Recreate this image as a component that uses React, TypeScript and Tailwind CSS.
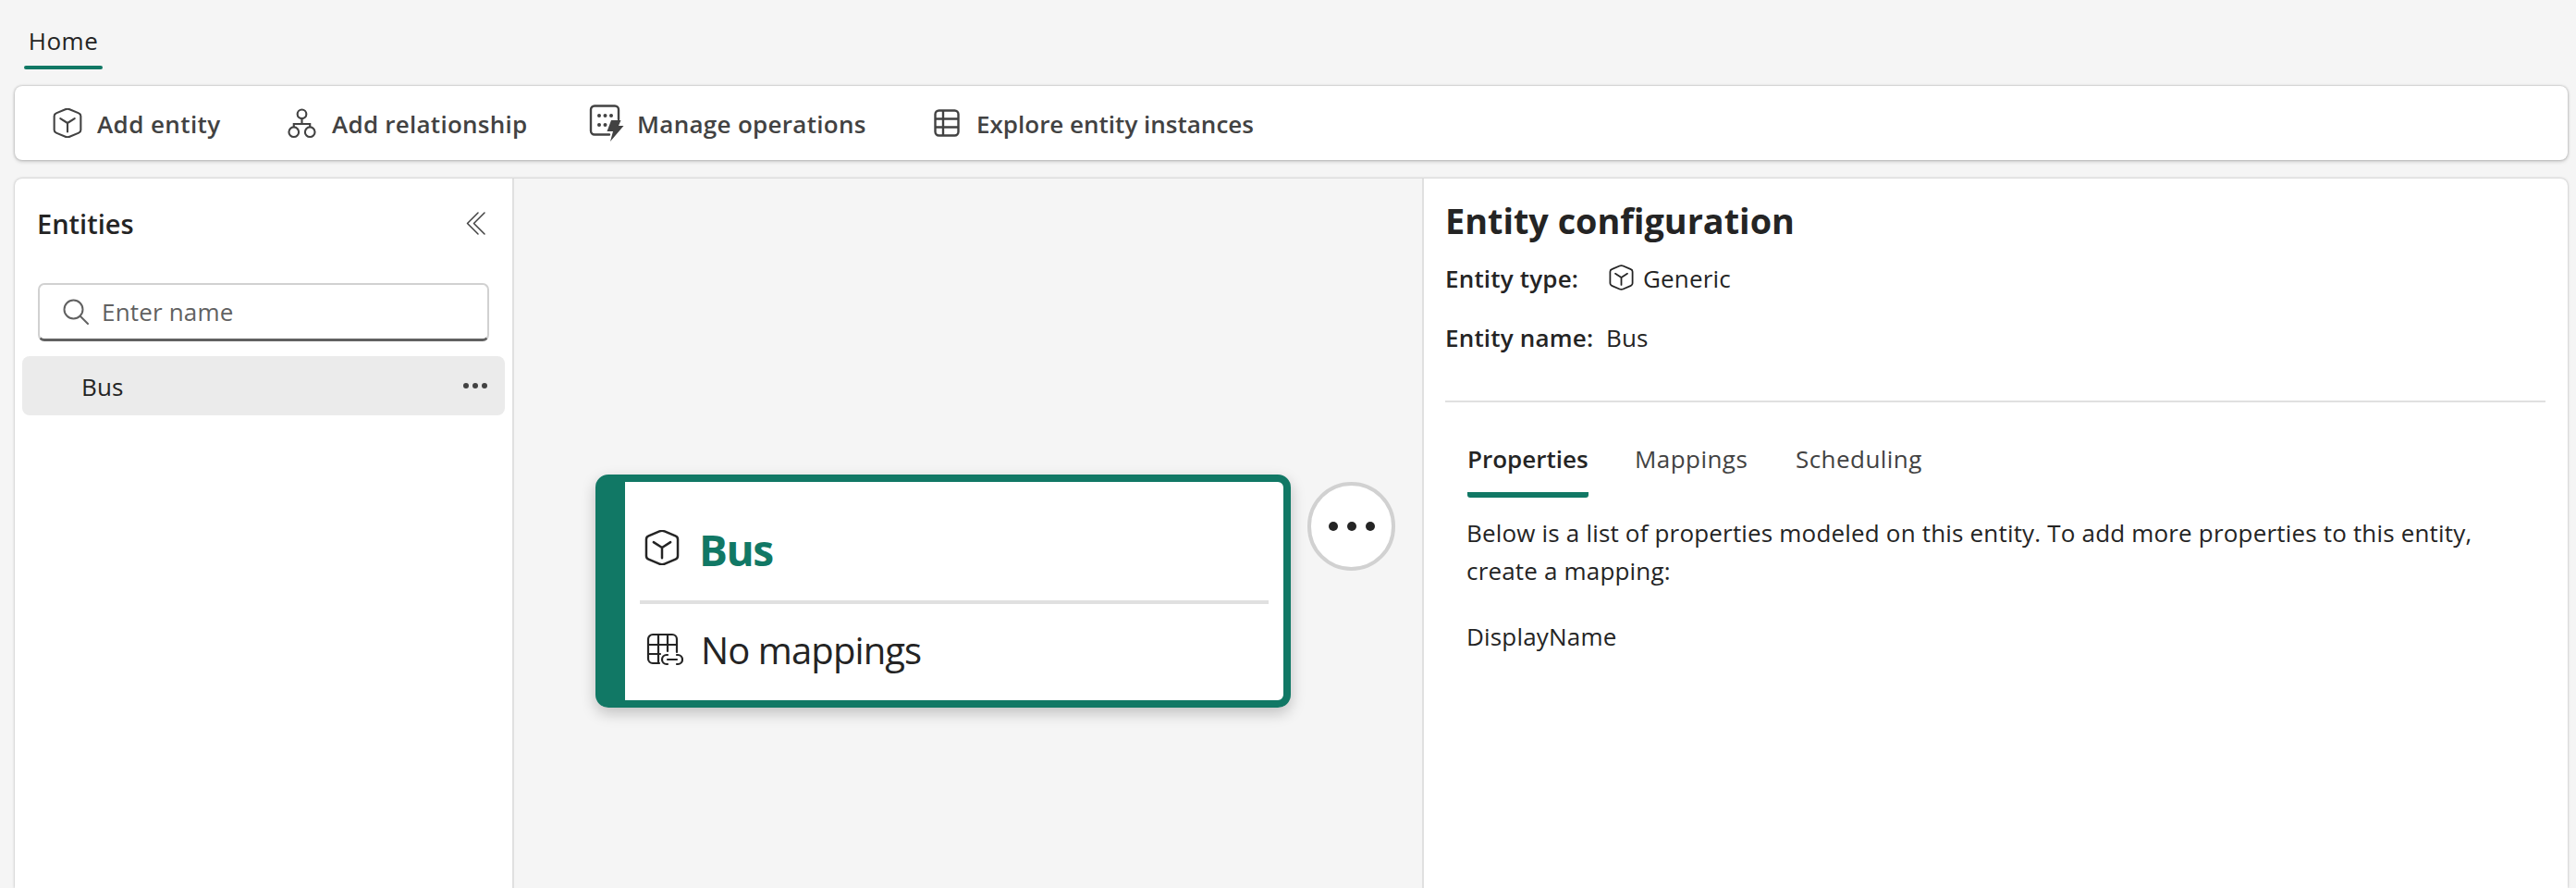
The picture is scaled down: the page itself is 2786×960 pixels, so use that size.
import React from 'react';

function CubeIcon({ className }: { className?: string }) {
  return (
    <svg viewBox="1.5 1.5 29 29" fill="none" stroke="currentColor" strokeWidth="1.9" strokeLinejoin="round" strokeLinecap="round" className={className}>
      <path d="M13.9 2.6 4.9 6.4A3 3 0 0 0 3 9.2v13.6a3 3 0 0 0 1.9 2.8l9 3.8a5.4 5.4 0 0 0 4.2 0l9-3.8a3 3 0 0 0 1.9-2.8V9.2a3 3 0 0 0-1.9-2.8l-9-3.8a5.4 5.4 0 0 0-4.2 0Z" />
      <path d="M9 11.5 16 16l7-4.5M16 16v8.500" />
    </svg>
  );
}

function RelationshipIcon({ className }: { className?: string }) {
  return (
    <svg viewBox="0 0 32 34" fill="none" stroke="currentColor" strokeWidth="2.2" className={className}>
      <circle cx="16" cy="7" r="5" />
      <circle cx="7" cy="27" r="5.500" />
      <circle cx="25" cy="27" r="5.500" />
      <path d="M16 12v6M7 21.500V18h18v3.500" />
    </svg>
  );
}

function OperationsIcon({ className }: { className?: string }) {
  return (
    <svg viewBox="0 0 38 40" fill="none" className={className}>
      <path d="M22 32.500H6a4 4 0 0 1-4-4V5.500a4 4 0 0 1 4-4h22a4 4 0 0 1 4 4V16" stroke="currentColor" strokeWidth="2.4" strokeLinecap="round" />
      <g fill="currentColor">
        <circle cx="11" cy="12" r="2" />
        <circle cx="17.500" cy="12" r="2" />
        <circle cx="24" cy="12" r="2" />
        <circle cx="11" cy="22" r="2" />
        <circle cx="17.500" cy="22" r="2" />
        <path d="M24 17h10.500l-2.500 6h5.500L23 40l3-11h-6.500L24 17Z" />
      </g>
    </svg>
  );
}

function TableIcon({ className }: { className?: string }) {
  return (
    <svg viewBox="0 0 28 30" fill="none" stroke="currentColor" strokeWidth="2.4" className={className}>
      <rect x="1.500" y="1.500" width="25" height="27" rx="4" />
      <path d="M1.500 10.500h25M1.500 19.500h25M10 1.500v27" />
    </svg>
  );
}

function TableLinkIcon({ className }: { className?: string }) {
  return (
    <svg viewBox="0 0 40 36" fill="none" stroke="currentColor" strokeWidth="2.2" strokeLinecap="round" className={className}>
      <path d="M14 33H7a5 5 0 0 1-5-5V7a5 5 0 0 1 5-5h21a5 5 0 0 1 5 5v14" />
      <path d="M2 13h31M2 23h13M13 2v31M23 2v18" />
      <path d="M23 24h-1a5 5 0 0 0 0 10h1M33 24h1a5 5 0 0 1 0 10h-1M23 29h10" />
    </svg>
  );
}

const toolbarItems = [
  { label: 'Add entity', icon: <CubeIcon className="w-[32px] h-[32px]" />, gap: 'gap-[16px]', width: 'w-[254px]', spacing: 'tracking-[0.4px]' },
  { label: 'Add relationship', icon: <RelationshipIcon className="w-[31px] h-[34px]" />, gap: 'gap-[17px]', width: 'w-[326px]', spacing: 'tracking-[0.25px]' },
  { label: 'Manage operations', icon: <OperationsIcon className="w-[38px] h-[40px]" />, gap: 'gap-[14px]', width: 'w-[373px]', spacing: 'tracking-[0.3px]' },
  { label: 'Explore entity instances', icon: <TableIcon className="w-[28px] h-[30px]" />, gap: 'gap-[18px]', width: '', spacing: 'tracking-normal' },
];

export default function App() {
  return (
    <div className="h-[960px] overflow-hidden bg-[#f5f5f5] pl-[16px] pr-[9px] text-[#242424] font-['Open_Sans','Liberation_Sans',sans-serif] text-[26px] tracking-[0.18px]">
      {/* Tabs */}
      <div className="h-[93px] pt-[26px]">
        <div className="w-[85px] ml-[10px] text-center leading-[36px] pb-[9px] tracking-[0.5px] relative">
          Home
          <div className="absolute left-0 right-0 top-[45px] h-[4px] rounded-full bg-[#117865]"></div>
        </div>
      </div>

      {/* Toolbar */}
      <div className="h-[80px] bg-white rounded-[8px] shadow-[0_0_3px_rgba(0,0,0,0.3),0_2px_4px_rgba(0,0,0,0.14)] flex items-center pl-[41px] text-[#424242] font-semibold">
        {toolbarItems.map((item) => (
          <div key={item.label} className={`flex items-center shrink-0 ${item.gap} ${item.width}`}>
            {item.icon}
            <span className={`mt-[2px] ${item.spacing}`}>{item.label}</span>
          </div>
        ))}
      </div>

      {/* Main panel */}
      <div className="mt-[20px] h-[767px] flex bg-white rounded-t-[8px] shadow-[0_0_3px_rgba(0,0,0,0.3)] overflow-hidden">
        {/* Entities list */}
        <div className="w-[540px] shrink-0 border-r-2 border-[#e0e0e0] pt-[29px] pl-[8px]">
          <div className="h-[40px] flex items-center justify-between pl-[16px] pr-[29px]">
            <span className="font-semibold text-[29px] leading-[40px] tracking-normal">Entities</span>
            <svg viewBox="0 0 21 25" fill="none" stroke="#424242" strokeWidth="1.500" strokeLinecap="round" strokeLinejoin="round" className="w-[21px] h-[25px] -mt-[2px]">
              <path d="M13 1 1.500 12.500 13 24M20 1 8.500 12.500 20 24" />
            </svg>
          </div>
          <div className="mt-[44px] ml-[17px] w-[488px] h-[63px] flex items-center gap-[14px] pl-[25px] border-2 border-[#d1d1d1] border-b-[3px] border-b-[#616161] rounded-[7px] text-[#616161]">
            <svg viewBox="0 0 28 28" fill="none" stroke="currentColor" strokeWidth="2" strokeLinecap="round" className="w-[28px] h-[28px]">
              <circle cx="11.500" cy="11.500" r="10" />
              <path d="M19 19l8 8" />
            </svg>
            <span>Enter name</span>
          </div>
          <div className="mt-[16px] w-[522px] h-[64px] flex items-center justify-between pl-[64px] pr-[19px] bg-[#ebebeb] rounded-[8px]">
            <span className="mt-[2px]">Bus</span>
            <div className="flex gap-[4px]">
              <div className="w-[6px] h-[6px] rounded-full bg-[#424242]"></div>
              <div className="w-[6px] h-[6px] rounded-full bg-[#424242]"></div>
              <div className="w-[6px] h-[6px] rounded-full bg-[#424242]"></div>
            </div>
          </div>
        </div>

        {/* Canvas */}
        <div className="w-[982px] shrink-0 bg-[#f5f5f5] pt-[320px] pl-[88px] flex items-start gap-[18px]">
          <div className="w-[752px] h-[252px] shrink-0 flex rounded-[14px] border-y-[8px] border-r-[8px] border-l-[32px] border-[#117865] bg-white shadow-[0_6px_16px_rgba(0,0,0,0.22)]">
            <div className="flex-1 px-[16px]">
              <div className="h-[132px] pt-[14px] flex items-center gap-[21px] pl-[5px] border-b-[4px] border-[#e0e0e0]">
                <CubeIcon className="w-[38px] h-[38px] -mt-[1px]" />
                <span className="text-[46px] leading-[60px] mt-[3px] font-bold text-[#117865] tracking-[-1.500px]">Bus</span>
              </div>
              <div className="h-[100px] flex items-center gap-[19px] pl-[7px]">
                <TableLinkIcon className="w-[40px] h-[36px] -mt-[2px]" />
                <span className="text-[40px] leading-[56px] tracking-[-0.900px]">No mappings</span>
              </div>
            </div>
          </div>
          <div className="mt-[8px] w-[95px] h-[96px] shrink-0 flex items-center justify-center gap-[10px] rounded-full border-[4px] border-[#d1d1d1] bg-white">
            <div className="w-[10px] h-[10px] rounded-full bg-[#242424]"></div>
            <div className="w-[10px] h-[10px] rounded-full bg-[#242424]"></div>
            <div className="w-[10px] h-[10px] rounded-full bg-[#242424]"></div>
          </div>
        </div>

        {/* Entity configuration */}
        <div className="flex-1 border-l-2 border-[#e0e0e0] pl-[23px] pr-[24px] pt-[20px]">
          <div className="text-[37.8px] leading-[52px] font-bold tracking-normal">Entity configuration</div>
          <div className="mt-[18px] h-[36px] flex items-center">
            <span className="w-[177px] font-semibold">Entity type:</span>
            <CubeIcon className="w-[27px] h-[28px] text-[#242424] -mt-[3px]" />
            <span className="ml-[10px]">Generic</span>
          </div>
          <div className="mt-[28px] h-[36px] flex items-center">
            <span className="w-[174px] font-semibold">Entity name:</span>
            <span>Bus</span>
          </div>
          <div className="mt-[50px] h-[2px] bg-[#e0e0e0]"></div>

          <div className="mt-[40px] ml-[24px] flex text-[#424242]">
            <div className="w-[131px] h-[63px] mr-[50px] font-semibold text-[#242424] tracking-normal border-b-[6px] border-[#117865] rounded-b-[3px] whitespace-nowrap leading-[42px]">Properties</div>
            <div className="w-[122px] mr-[52px] leading-[42px] tracking-[0.45px]">Mappings</div>
            <div className="leading-[42px] tracking-[0.45px]">Scheduling</div>
          </div>
          <div className="ml-[23px] mt-[18px] w-[1110px] leading-[41px]">
            Below is a list of properties modeled on this entity. To add more properties to this entity, create a mapping:
          </div>
          <div className="ml-[23px] mt-[30px] leading-[41px]">DisplayName</div>
        </div>
      </div>
    </div>
  );
}
